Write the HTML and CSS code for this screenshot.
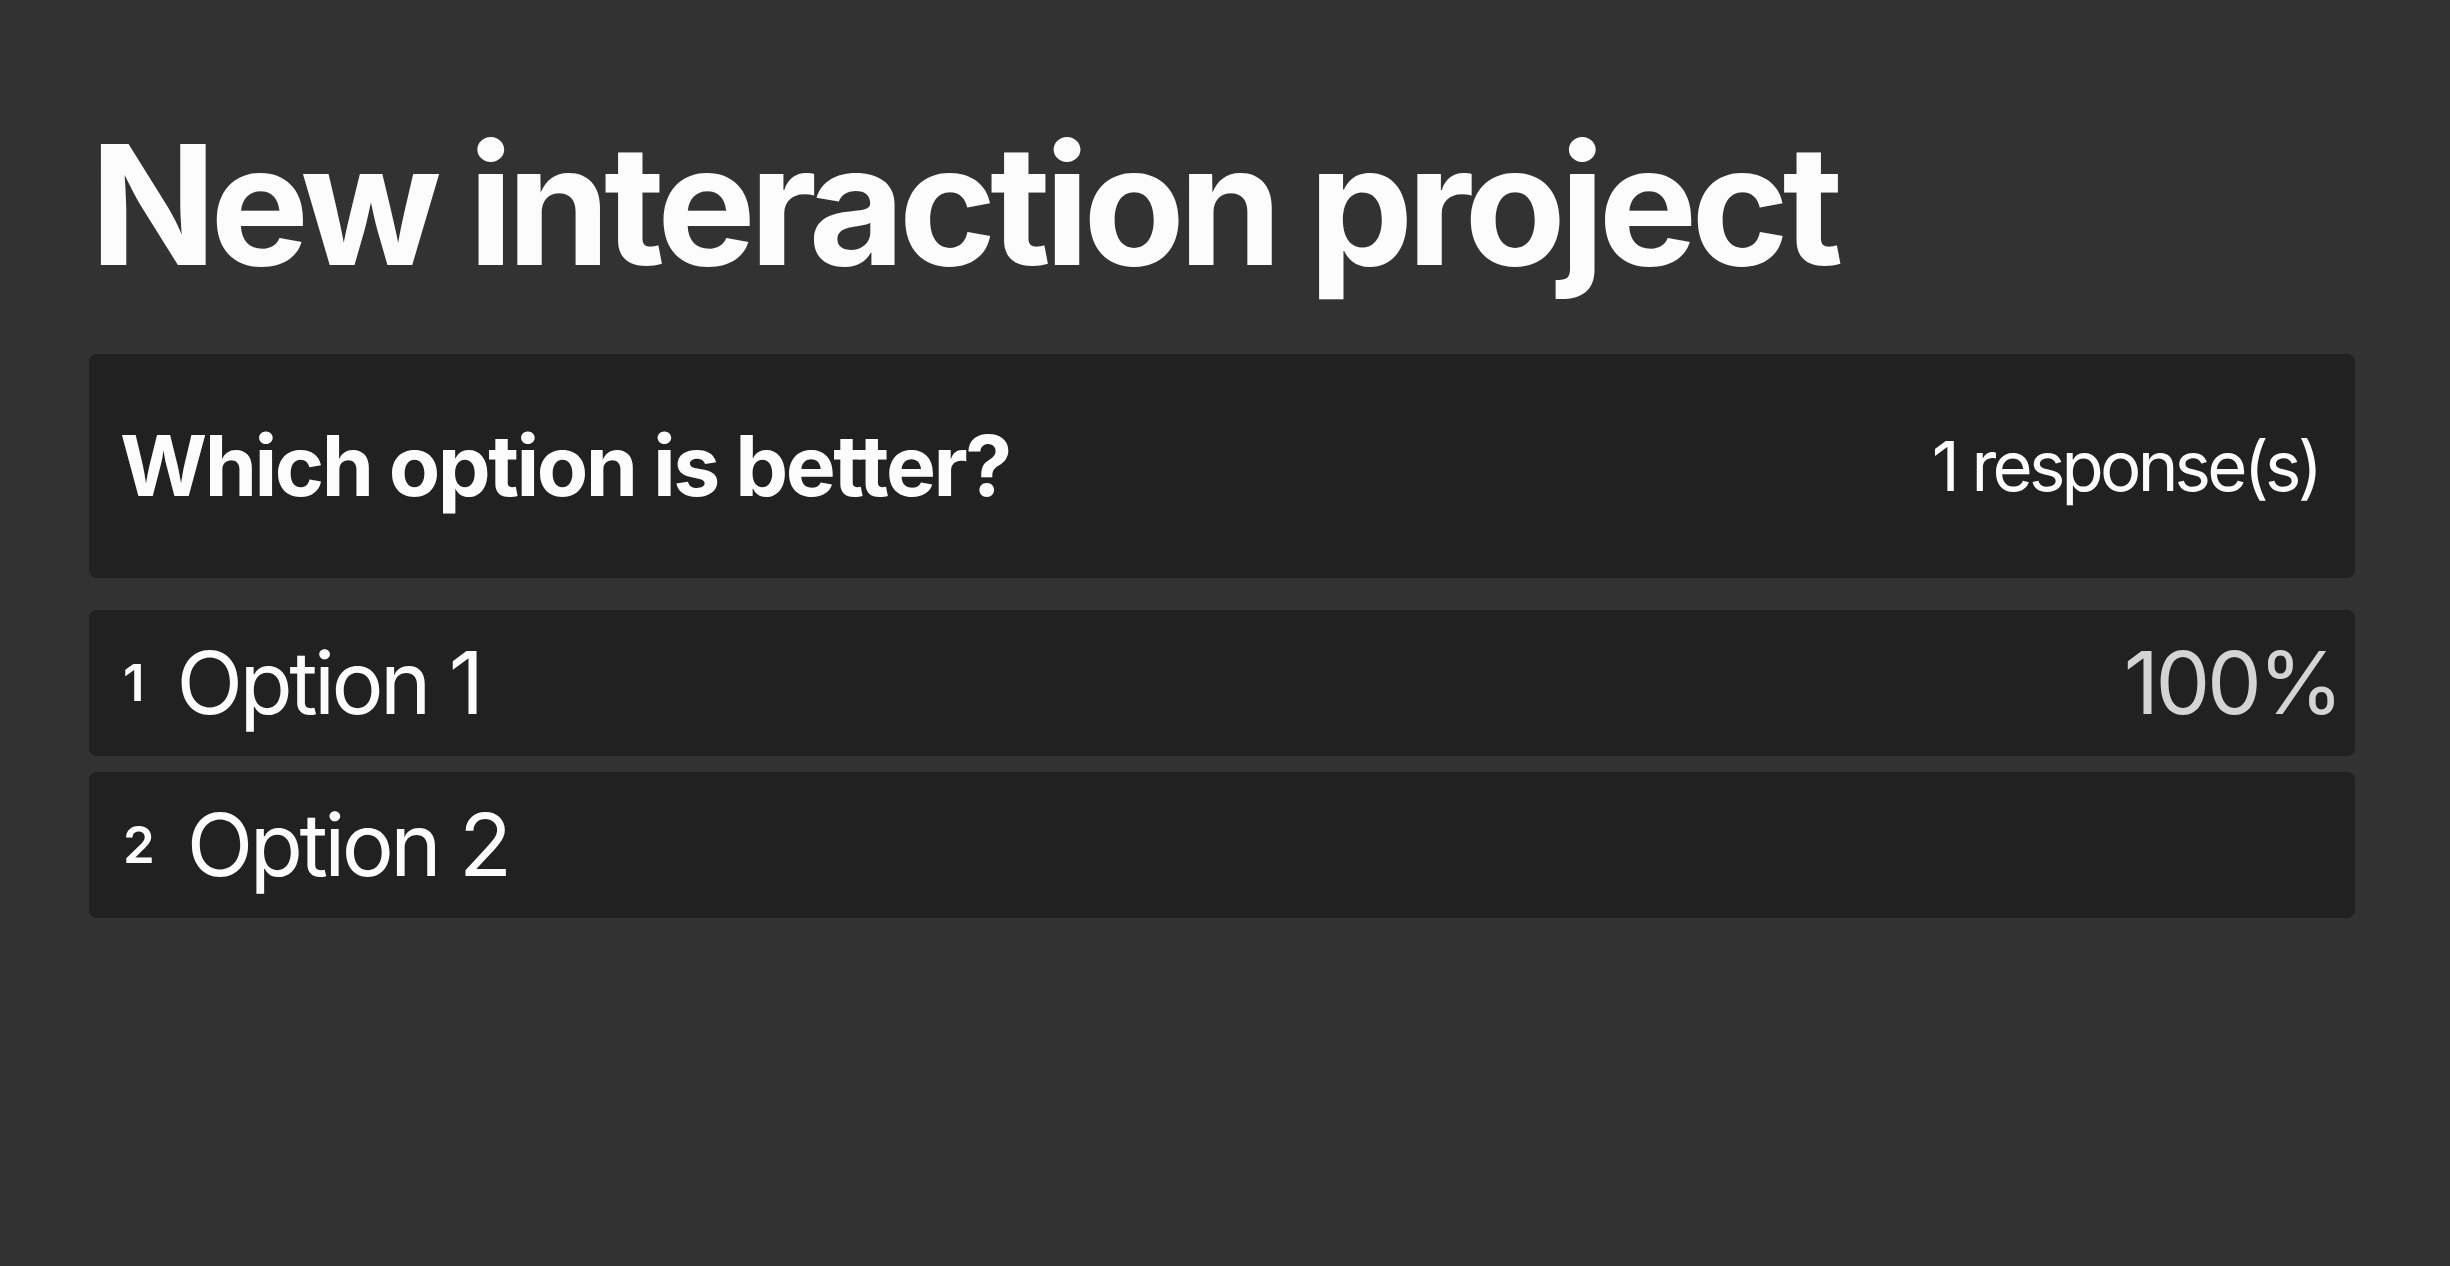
FILE: index.html
```html
<!DOCTYPE html>
<html lang="en">
<head>
<meta charset="utf-8">
<title>New interaction project</title>
<link rel="stylesheet" href="styles.css">
</head>
<body>
<main class="page">
  <h1 class="title">New interaction project</h1>
  <section class="question-card">
    <h2 class="question">Which option is better?</h2>
    <span class="responses">1 response(s)</span>
  </section>
  <ol class="options">
    <li class="option">
      <span class="option-num">1</span>
      <span class="option-label">Option 1</span>
      <span class="option-pct">100%</span>
    </li>
    <li class="option">
      <span class="option-num">2</span>
      <span class="option-label">Option 2</span>
    </li>
  </ol>
</main>
</body>
</html>
```

FILE: styles.css
```css
html, body {
  margin: 0;
  padding: 0;
  background: #323232;
  color: #fcfcfc;
  font-family: Inter, "Noto Sans", "Liberation Sans", sans-serif;
}

.page {
  padding: 122px 95px 0 89px;
  display: flex;
  flex-direction: column;
}

.title {
  margin: 0 0 66px 0;
  font-size: 166px;
  line-height: 1;
  font-weight: 700;
  padding-left: 1px;
  letter-spacing: -6.3px;
}

.question-card {
  background: #212121;
  border-radius: 8px;
  padding: 70px 36px 70px 31px;
  display: flex;
  align-items: center;
  justify-content: space-between;
}

.question {
  margin: 0;
  font-size: 84px;
  line-height: 1;
  font-weight: 700;
  letter-spacing: -2.5px;
}

.responses {
  font-size: 69px;
  line-height: 1;
  font-weight: 400;
  letter-spacing: -3.8px;
}

.options {
  list-style: none;
  margin: 32px 0 0 0;
  padding: 0;
  display: flex;
  flex-direction: column;
  gap: 16px;
}

.option {
  background: #212121;
  border-radius: 8px;
  padding: 29px 15px 30px 34px;
  display: flex;
  align-items: center;
}

.option-num {
  font-size: 51px;
  line-height: 1;
  font-weight: 600;
  margin-right: 32px;
}

.option-label {
  font-size: 87px;
  line-height: 1;
  font-weight: 400;
  letter-spacing: -3.6px;
}

.option-pct {
  margin-left: auto;
  font-size: 87px;
  line-height: 1;
  font-weight: 400;
  color: #d4d4d4;
  letter-spacing: -3.6px;
}
```
